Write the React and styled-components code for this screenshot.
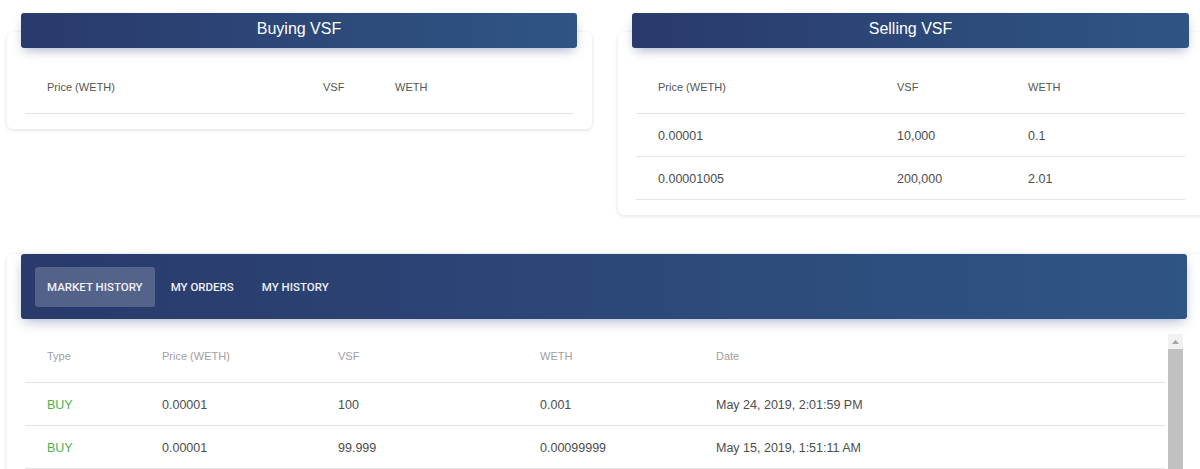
import React from "react";
import styled, { createGlobalStyle } from "styled-components";

const GlobalStyle = createGlobalStyle`
  body {
    margin: 0;
    background: #fff;
    overflow: hidden;
    font-family: "Liberation Sans", Arial, sans-serif;
  }
`;

const Page = styled.div`
  width: 1208px;
  padding: 32px 0 0 7px;
  box-sizing: border-box;
`;

const TopRow = styled.div`
  display: grid;
  grid-template-columns: 585px 586px;
  column-gap: 26px;
  align-items: start;
`;

const Card = styled.div`
  background: #fff;
  border-radius: 6px;
  box-shadow: 0 1px 4px rgba(0, 0, 0, 0.13);
  padding: 0 19px 15px 18px;
`;

const CardHeader = styled.div`
  margin: -19px -4px 0 -4px;
  height: 35px;
  box-sizing: border-box;
  padding-bottom: 4px;
  border-radius: 3px;
  background: linear-gradient(90deg, #293a6b, #2f5585);
  box-shadow: 0 5px 12px -3px rgba(40, 60, 110, 0.4);
  color: #fff;
  font-size: 16px;
  line-height: 31px;
  text-align: center;
`;

const Table = styled.table`
  width: 100%;
  border-collapse: separate;
  border-spacing: 0;
  table-layout: fixed;
  margin-top: ${(p) => p.$top || 0}px;
`;

const Th = styled.th`
  box-sizing: border-box;
  width: ${(p) => (p.$w ? `${p.$w}px` : "auto")};
  text-align: left;
  padding: ${(p) => (p.$light ? "16px 0 19px 22px" : "10px 0 19px 22px")};
  line-height: 13px;
  font-size: 11px;
  font-weight: 400;
  color: ${(p) => (p.$light ? "#a0a0a0" : "#555")};
  border-bottom: 1px solid #e4e4e4;
`;

const Td = styled.td`
  height: 40px;
  padding: 2px 0 0 22px;
  vertical-align: middle;
  font-size: 12.5px;
  color: ${(p) => (p.$buy ? "#4caf50" : "#4d4d4d")};
  border-bottom: 1px solid #e4e4e4;
  white-space: nowrap;
`;

const HistoryCard = styled(Card)`
  margin-top: 56px;
  width: 1195px;
  box-sizing: border-box;
  padding: 0 19px 40px 18px;
`;

const TabBar = styled(CardHeader)`
  margin-top: -17px;
  height: 65px;
  padding: 13px 14px;
  display: flex;
  gap: 4px;
  text-align: left;
`;

const Tab = styled.div`
  height: 40px;
  padding: 0 12px;
  border-radius: 3px;
  background: ${(p) => (p.$active ? "rgba(255,255,255,0.2)" : "transparent")};
  font-family: Roboto, "Liberation Sans", sans-serif;
  font-weight: 500;
  font-size: 11.5px;
  line-height: 40px;
  text-transform: uppercase;
  color: #eef0f5;
`;

const HistoryBody = styled.div`
  display: flex;
  align-items: flex-start;
  margin-top: 15px;
`;

const TableWrap = styled.div`
  flex: 1;
`;

const ScrollTrack = styled.div`
  width: 15px;
  height: 150px;
  margin-left: 3px;
  background: #f1f1f1;
  display: flex;
  flex-direction: column;
`;

const ScrollArrow = styled.div`
  height: 15px;
  display: flex;
  align-items: center;
  justify-content: center;
`;

const ScrollThumb = styled.div`
  flex: 1;
  background: #c1c1c1;
`;

const buying = { cols: [276, 72], rows: [] };
const selling = {
  cols: [239, 131],
  rows: [
    ["0.00001", "10,000", "0.1"],
    ["0.00001005", "200,000", "2.01"],
  ],
};

const history = [
  ["BUY", "0.00001", "100", "0.001", "May 24, 2019, 2:01:59 PM"],
  ["BUY", "0.00001", "99.999", "0.00099999", "May 15, 2019, 1:51:11 AM"],
];

const OrderCard = ({ title, data }) => (
  <Card>
    <CardHeader>{title}</CardHeader>
    <Table $top={23}>
      <thead>
        <tr>
          <Th $w={data.cols[0]}>Price (WETH)</Th>
          <Th $w={data.cols[1]}>VSF</Th>
          <Th>WETH</Th>
        </tr>
      </thead>
      <tbody>
        {data.rows.map((r, i) => (
          <tr key={i}>
            {r.map((c, j) => (
              <Td key={j}>{c}</Td>
            ))}
          </tr>
        ))}
      </tbody>
    </Table>
  </Card>
);

export default function App() {
  return (
    <Page>
      <GlobalStyle />
      <TopRow>
        <OrderCard title="Buying VSF" data={buying} />
        <OrderCard title="Selling VSF" data={selling} />
      </TopRow>

      <HistoryCard>
        <TabBar>
          <Tab $active>Market History</Tab>
          <Tab>My Orders</Tab>
          <Tab>My History</Tab>
        </TabBar>
        <HistoryBody>
          <TableWrap>
            <Table>
              <thead>
                <tr>
                  <Th $light $w={115}>Type</Th>
                  <Th $light $w={176}>Price (WETH)</Th>
                  <Th $light $w={202}>VSF</Th>
                  <Th $light $w={176}>WETH</Th>
                  <Th $light>Date</Th>
                </tr>
              </thead>
              <tbody>
                {history.map((r, i) => (
                  <tr key={i}>
                    {r.map((c, j) => (
                      <Td key={j} $buy={j === 0}>
                        {c}
                      </Td>
                    ))}
                  </tr>
                ))}
              </tbody>
            </Table>
          </TableWrap>
          <ScrollTrack>
            <ScrollArrow>
              <svg width="7" height="4" viewBox="0 0 7 4">
                <path d="M0 4 L3.5 0 L7 4 Z" fill="#a3a3a3" />
              </svg>
            </ScrollArrow>
            <ScrollThumb />
          </ScrollTrack>
        </HistoryBody>
      </HistoryCard>
    </Page>
  );
}
